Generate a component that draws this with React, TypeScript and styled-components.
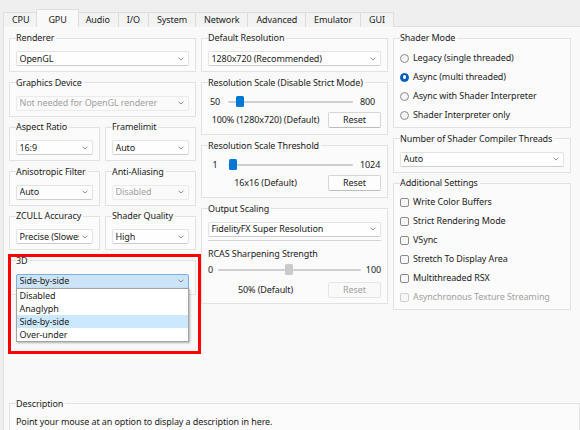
import React from 'react';
import styled, { createGlobalStyle, css } from 'styled-components';

const GlobalStyle = createGlobalStyle`
  html, body {
    margin: 0;
    padding: 0;
    background: #efefef;
  }
  body {
    font-family: "Noto Sans", "Open Sans", sans-serif;
    font-size: 9px;
    letter-spacing: -0.1px;
    color: #1b1b1b;
  }
  * {
    box-sizing: border-box;
  }
`;

const FS = '9px';

const tabs = ['CPU', 'GPU', 'Audio', 'I/O', 'System', 'Network', 'Advanced', 'Emulator', 'GUI'];

const shaderModes = [
  { label: 'Legacy (single threaded)', checked: false },
  { label: 'Async (multi threaded)', checked: true },
  { label: 'Async with Shader Interpreter', checked: false },
  { label: 'Shader Interpreter only', checked: false },
];

const additional = [
  { label: 'Write Color Buffers', disabled: false },
  { label: 'Strict Rendering Mode', disabled: false },
  { label: 'VSync', disabled: false },
  { label: 'Stretch To Display Area', disabled: false },
  { label: 'Multithreaded RSX', disabled: false },
  { label: 'Asynchronous Texture Streaming', disabled: true },
];

const stereoModes = ['Disabled', 'Anaglyph', 'Side-by-side', 'Over-under'];

const Chevron = () => (
  <svg width="6" height="4" viewBox="0 0 6 4">
    <path d="M0.6 0.8 L3 3 L5.4 0.8" fill="none" stroke="#808080" strokeWidth="0.9" />
  </svg>
);

interface ComboBoxProps {
  value: string;
  disabled?: boolean;
  open?: boolean;
  options?: string[];
}

const ComboBox: React.FC<ComboBoxProps> = ({ value, disabled, open, options }) => (
  <ComboWrap>
    <Combo $disabled={disabled} $open={open}>
      <ComboText>{value}</ComboText>
      <Chevron />
    </Combo>
    {open && options && (
      <Popup>
        {options.map((o) => (
          <PopupItem key={o} $selected={o === value}>
            {o}
          </PopupItem>
        ))}
      </Popup>
    )}
  </ComboWrap>
);

interface SliderProps {
  min: string;
  max: string;
  frac: number;
  disabled?: boolean;
  compact?: boolean;
}

const Slider: React.FC<SliderProps> = ({ min, max, frac, disabled, compact }) => (
  <SliderRow $compact={compact}>
    <MinLabel $compact={compact}>{min}</MinLabel>
    <Track>
      <Thumb $disabled={disabled} style={{ left: `calc(${frac} * (100% - 8px))` }} />
    </Track>
    <MaxLabel $compact={compact}>{max}</MaxLabel>
  </SliderRow>
);

const ValueRow: React.FC<{ text: string; disabled?: boolean; loose?: boolean }> = ({
  text,
  disabled,
  loose,
}) => (
  <ValueLine $loose={loose}>
    <ValueText>{text}</ValueText>
    <ResetButton $disabled={disabled}>Reset</ResetButton>
  </ValueLine>
);

const App: React.FC = () => {
  return (
    <>
      <GlobalStyle />
      <Window>
        <TabBar>
          {tabs.map((t) => (
            <Tab key={t} $active={t === 'GPU'}>
              {t}
            </Tab>
          ))}
        </TabBar>
        <Pane>
          <Columns>
            <Column>
              <Group>
                <Legend>Renderer</Legend>
                <GroupBody>
                  <ComboBox value="OpenGL" />
                </GroupBody>
              </Group>
              <Group>
                <Legend>Graphics Device</Legend>
                <GroupBody>
                  <ComboBox value="Not needed for OpenGL renderer" disabled />
                </GroupBody>
              </Group>
              <Pair>
                <Group>
                  <Legend>Aspect Ratio</Legend>
                  <GroupBody>
                    <ComboBox value="16:9" />
                  </GroupBody>
                </Group>
                <Group>
                  <Legend>Framelimit</Legend>
                  <GroupBody>
                    <ComboBox value="Auto" />
                  </GroupBody>
                </Group>
              </Pair>
              <Pair>
                <Group>
                  <Legend>Anisotropic Filter</Legend>
                  <GroupBody>
                    <ComboBox value="Auto" />
                  </GroupBody>
                </Group>
                <Group>
                  <Legend>Anti-Aliasing</Legend>
                  <GroupBody>
                    <ComboBox value="Disabled" disabled />
                  </GroupBody>
                </Group>
              </Pair>
              <Pair>
                <Group>
                  <Legend>ZCULL Accuracy</Legend>
                  <GroupBody>
                    <ComboBox value="Precise (Slowest)" />
                  </GroupBody>
                </Group>
                <Group>
                  <Legend>Shader Quality</Legend>
                  <GroupBody>
                    <ComboBox value="High" />
                  </GroupBody>
                </Group>
              </Pair>
              <Highlighted>
                <Group>
                  <Legend>3D</Legend>
                  <GroupBody>
                    <ComboBox value="Side-by-side" open options={stereoModes} />
                  </GroupBody>
                </Group>
                <RedFrame />
              </Highlighted>
            </Column>

            <Column>
              <Group>
                <Legend>Default Resolution</Legend>
                <GroupBody>
                  <ComboBox value="1280x720 (Recommended)" />
                </GroupBody>
              </Group>
              <Group $bottom={6.5}>
                <Legend>Resolution Scale (Disable Strict Mode)</Legend>
                <GroupBody>
                  <Slider min="50" max="800" frac={50 / 750} />
                  <ValueRow text="100% (1280x720) (Default)" />
                </GroupBody>
              </Group>
              <Group $bottom={6.5}>
                <Legend>Resolution Scale Threshold</Legend>
                <GroupBody>
                  <Slider min="1" max="1024" frac={0.005} />
                  <ValueRow text="16x16 (Default)" />
                </GroupBody>
              </Group>
              <Group>
                <Legend>Output Scaling</Legend>
                <GroupBody>
                  <ComboBox value="FidelityFX Super Resolution" />
                  <Separator />
                  <SubLabel>RCAS Sharpening Strength</SubLabel>
                  <Slider min="0" max="100" frac={0.5} disabled compact />
                  <ValueRow text="50% (Default)" disabled loose />
                </GroupBody>
              </Group>
            </Column>

            <Column>
              <Group $bottom={2.5}>
                <Legend>Shader Mode</Legend>
                <ListBody>
                  {shaderModes.map((m) => (
                    <OptionRow key={m.label}>
                      <Radio $checked={m.checked} />
                      <span>{m.label}</span>
                    </OptionRow>
                  ))}
                </ListBody>
              </Group>
              <Group>
                <Legend>Number of Shader Compiler Threads</Legend>
                <GroupBody>
                  <ComboBox value="Auto" />
                </GroupBody>
              </Group>
              <Group $bottom={2}>
                <Legend>Additional Settings</Legend>
                <ListBody $checks>
                  {additional.map((a) => (
                    <OptionRow key={a.label} $disabled={a.disabled}>
                      <CheckBox $disabled={a.disabled} />
                      <span>{a.label}</span>
                    </OptionRow>
                  ))}
                </ListBody>
              </Group>
            </Column>
          </Columns>

          <DescriptionGroup>
            <Legend>Description</Legend>
            <DescriptionText>Point your mouse at an option to display a description in here.</DescriptionText>
          </DescriptionGroup>
        </Pane>
      </Window>
    </>
  );
};

const Window = styled.div`
  width: 580px;
  height: 430px;
  overflow: hidden;
  background: #efefef;
  padding: 9px 0 0 3px;
  display: flex;
  flex-direction: column;
`;

const TabBar = styled.div`
  display: flex;
  align-items: flex-end;
  height: 18px;
  margin-bottom: -1px;
  position: relative;
  z-index: 1;
`;

const Tab = styled.div<{ $active?: boolean }>`
  height: 15px;
  padding: 1px 8px 0;
  line-height: 12px;
  font-size: ${FS};
  background: #f3f3f3;
  border: 1px solid #dedede;
  border-bottom: none;
  margin-right: -1px;
  white-space: nowrap;

  ${({ $active }) =>
    $active &&
    css`
      height: 18px;
      padding: 4px 11px 0;
      margin: 0 -2px 0 -1px;
      background: #f9f9f9;
      position: relative;
      z-index: 2;
    `}
`;

const Pane = styled.div`
  flex: 1;
  width: 583px;
  background: #f9f9f9;
  border: 1px solid #dedede;
  padding: 5px 5px 0 5px;
`;

const Columns = styled.div`
  display: grid;
  grid-template-columns: 187px 187px 178px;
  column-gap: 5px;
  align-items: start;
`;

const Column = styled.div`
  display: flex;
  flex-direction: column;
  gap: 4.5px;
`;

const Pair = styled.div`
  display: grid;
  grid-template-columns: 1fr 1fr;
  column-gap: 5px;
`;

const Group = styled.fieldset<{ $bottom?: number }>`
  margin: 0;
  min-width: 0;
  border: 1px solid #e2e2e2;
  background: #fbfbfb;
  padding: 0 6px ${({ $bottom = 5 }) => `${$bottom}px`} 6px;
`;

const Legend = styled.legend`
  padding: 0 2px 0 0;
  line-height: 12px;
  font-size: ${FS};
  white-space: nowrap;
  color: #1b1b1b;
`;

const GroupBody = styled.div`
  padding-top: 7px;
  display: flex;
  flex-direction: column;
`;

const ListBody = styled.div<{ $checks?: boolean }>`
  padding-top: ${({ $checks }) => ($checks ? '3.5px' : '4.5px')};
  display: flex;
  flex-direction: column;
`;

const ComboWrap = styled.div`
  position: relative;
`;

const Combo = styled.div<{ $disabled?: boolean; $open?: boolean }>`
  height: 15px;
  display: flex;
  align-items: center;
  justify-content: space-between;
  padding: 0 4px 0 2.5px;
  background: #fefefe;
  border: 1px solid #e3e3e3;
  border-bottom-color: #cdcdcd;
  border-radius: 2px;
  color: #1b1b1b;

  ${({ $disabled }) =>
    $disabled &&
    css`
      background: #fafafa;
      border-color: #ebebeb;
      color: #a2a2a2;
    `}

  ${({ $open }) =>
    $open &&
    css`
      background: #cde4f7;
      border-color: #7ab0e2;
    `}
`;

const ComboText = styled.span`
  line-height: 12px;
  font-size: ${FS};
  white-space: nowrap;
  overflow: hidden;
  flex: 1;
  margin-right: 3px;
`;

const Popup = styled.div`
  position: absolute;
  top: calc(100% - 1px);
  left: 0;
  right: 0;
  background: #ffffff;
  border: 1px solid #a3a3a3;
  box-shadow: 1px 1px 2px rgba(0, 0, 0, 0.3);
  z-index: 5;
`;

const PopupItem = styled.div<{ $selected?: boolean }>`
  height: 13px;
  line-height: 13px;
  padding-left: 2.5px;
  font-size: ${FS};
  background: ${({ $selected }) => ($selected ? '#cce8ff' : 'transparent')};
`;

const Highlighted = styled.div`
  position: relative;
`;

const RedFrame = styled.div`
  position: absolute;
  top: -1px;
  left: -1px;
  width: 193px;
  height: 100px;
  border: 3px solid #ff0000;
  pointer-events: none;
  z-index: 6;
`;

const SliderRow = styled.div<{ $compact?: boolean }>`
  height: 12px;
  margin-top: ${({ $compact }) => ($compact ? '4px' : '0')};
  display: flex;
  align-items: center;
  gap: ${({ $compact }) => ($compact ? '5px' : '6px')};
`;

const MinLabel = styled.span<{ $compact?: boolean }>`
  font-size: ${FS};
  line-height: 12px;
  text-align: center;
  width: ${({ $compact }) => ($compact ? 'auto' : '14px')};
`;

const MaxLabel = styled.span<{ $compact?: boolean }>`
  font-size: ${FS};
  line-height: 12px;
  width: ${({ $compact }) => ($compact ? 'auto' : '21px')};
  margin-left: ${({ $compact }) => ($compact ? '0' : '1px')};
`;

const Track = styled.div`
  flex: 1;
  height: 2px;
  background: #cfcfcf;
  border-radius: 1px;
  position: relative;
`;

const Thumb = styled.div<{ $disabled?: boolean }>`
  position: absolute;
  top: -4.5px;
  width: 8px;
  height: 11px;
  border-radius: 1.5px;
  background: ${({ $disabled }) => ($disabled ? '#cacaca' : '#0078d4')};
`;

const ValueLine = styled.div<{ $loose?: boolean }>`
  margin-top: ${({ $loose }) => ($loose ? '6px' : '4px')};
  display: flex;
  align-items: center;
  gap: 5px;
`;

const ValueText = styled.span`
  flex: 1;
  text-align: center;
  font-size: ${FS};
  line-height: 12px;
  white-space: nowrap;
`;

const ResetButton = styled.div<{ $disabled?: boolean }>`
  width: 53px;
  height: 16px;
  line-height: 14px;
  text-align: center;
  font-size: ${FS};
  background: #fdfdfd;
  border: 1px solid #d6d6d6;
  border-bottom-color: #bdbdbd;
  border-radius: 2px;
  flex-shrink: 0;

  ${({ $disabled }) =>
    $disabled &&
    css`
      background: #f9f9f9;
      border-color: #e6e6e6;
      color: #a2a2a2;
    `}
`;

const Separator = styled.div`
  height: 1px;
  margin-top: 3px;
  background: #d4d4d4;
`;

const SubLabel = styled.div`
  margin-top: 7px;
  line-height: 12px;
  font-size: ${FS};
`;

const OptionRow = styled.div<{ $disabled?: boolean }>`
  height: 19px;
  display: flex;
  align-items: center;
  gap: 4px;
  font-size: ${FS};
  line-height: 12px;
  white-space: nowrap;
  color: ${({ $disabled }) => ($disabled ? '#a2a2a2' : '#1b1b1b')};
`;

const Radio = styled.span<{ $checked?: boolean }>`
  width: 9px;
  height: 9px;
  border-radius: 50%;
  border: 1px solid #8a8a8a;
  background: #f7f7f7;
  display: inline-flex;
  align-items: center;
  justify-content: center;
  flex-shrink: 0;

  ${({ $checked }) =>
    $checked &&
    css`
      background: #005fb8;
      border-color: #005fb8;
      &::after {
        content: '';
        width: 3.5px;
        height: 3.5px;
        border-radius: 50%;
        background: #ffffff;
      }
    `}
`;

const CheckBox = styled.span<{ $disabled?: boolean }>`
  width: 9px;
  height: 9px;
  border-radius: 2px;
  border: 1px solid ${({ $disabled }) => ($disabled ? '#cfcfcf' : '#8a8a8a')};
  background: #f7f7f7;
  flex-shrink: 0;
`;

const DescriptionGroup = styled(Group)`
  margin-top: 88px;
  padding-bottom: 12px;
`;

const DescriptionText = styled.div`
  padding-top: 6px;
  line-height: 12px;
  font-size: ${FS};
`;

export default App;
